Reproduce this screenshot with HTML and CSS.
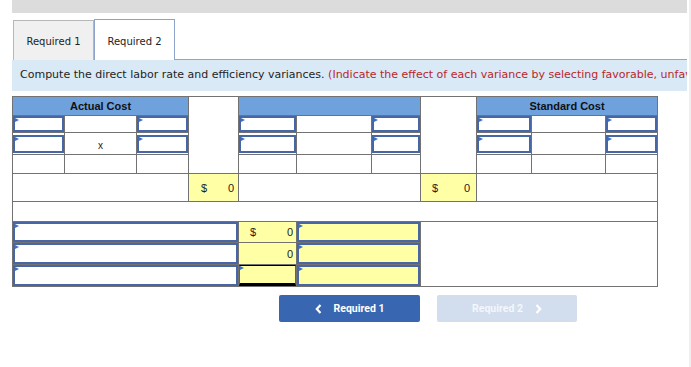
FILE: index.html
```html
<!DOCTYPE html>
<html>
<head>
<meta charset="utf-8">
<link rel="stylesheet" href="styles.css">
</head>
<body>
<div class="page">
  <div class="topbar"></div>
  <div class="tabs">
    <div class="tab">Required 1</div>
    <div class="tab active">Required 2</div>
    <div class="tabfill"></div>
  </div>
  <div class="instr"><span class="dark">Compute the direct labor rate and efficiency variances.</span> <span class="red">(Indicate the effect of each variance by selecting favorable, unfavorable, and no variance.)</span></div>
  <table class="grid">
    <colgroup>
      <col class="w52"><col class="w72"><col class="w52"><col class="w50"><col class="w58"><col class="w75"><col class="w49"><col class="w56"><col class="w55"><col class="w74"><col class="w52">
    </colgroup>
    <tr class="rh">
      <td colspan="3" class="head">Actual Cost</td>
      <td rowspan="4" class="blank"></td>
      <td colspan="3" class="head"></td>
      <td rowspan="4" class="blank"></td>
      <td colspan="3" class="head">Standard Cost</td>
    </tr>
    <tr class="r1">
      <td class="inp"><div class="box"></div></td><td></td><td class="inp"><div class="box"></div></td>
      <td class="inp"><div class="box"></div></td><td></td><td class="inp"><div class="box"></div></td>
      <td class="inp"><div class="box"></div></td><td></td><td class="inp"><div class="box"></div></td>
    </tr>
    <tr class="r2">
      <td class="inp"><div class="box"></div></td><td class="mid">x</td><td class="inp"><div class="box"></div></td>
      <td class="inp"><div class="box"></div></td><td></td><td class="inp"><div class="box"></div></td>
      <td class="inp"><div class="box"></div></td><td></td><td class="inp"><div class="box"></div></td>
    </tr>
    <tr class="r3">
      <td></td><td></td><td></td>
      <td></td><td></td><td></td>
      <td></td><td></td><td></td>
    </tr>
    <tr class="r4">
      <td colspan="3"></td>
      <td class="yel"><div class="amt a1"><span>$</span><span>0</span></div></td>
      <td colspan="3"></td>
      <td class="yel"><div class="amt a2"><span>$</span><span>0</span></div></td>
      <td colspan="3"></td>
    </tr>
    <tr class="r5">
      <td colspan="11"></td>
    </tr>
    <tr class="r6">
      <td colspan="4" class="inp"><div class="box"></div></td>
      <td class="yel"><div class="amt a3"><span>$</span><span>0</span></div></td>
      <td colspan="2" class="inp"><div class="box ybox"></div></td>
      <td colspan="4" rowspan="3"></td>
    </tr>
    <tr class="r7">
      <td colspan="4" class="inp"><div class="box"></div></td>
      <td class="yel"><div class="amt a3"><span></span><span>0</span></div></td>
      <td colspan="2" class="inp"><div class="box ybox"></div></td>
    </tr>
    <tr class="r8">
      <td colspan="4" class="inp"><div class="box"></div></td>
      <td class="inp"><div class="box tbox"></div></td>
      <td colspan="2" class="inp"><div class="box ybox"></div></td>
    </tr>
  </table>
  <div class="nav">
    <div class="btn prev">
      <svg class="chev" width="7" height="10" viewBox="0 0 7 10"><path d="M5.5 1 L1.8 5 L5.5 9" fill="none" stroke="#ffffff" stroke-width="2.2"/></svg>
      <span>Required 1</span>
    </div>
    <div class="btn next">
      <span>Required 2</span>
      <svg class="chev" width="7" height="10" viewBox="0 0 7 10"><path d="M1.5 1 L5.2 5 L1.5 9" fill="none" stroke="#ffffff" stroke-width="2.2"/></svg>
    </div>
  </div>
</div>
<div class="scrolltrack"></div>
</body>
</html>
```
FILE: styles.css
```css
html, body {
  margin: 0;
  padding: 0;
  background: #ffffff;
}
body {
  display: flex;
}
.page {
  padding-left: 12px;
  width: 675px;
  font-family: "DejaVu Sans", Verdana, sans-serif;
}
.scrolltrack {
  margin-left: 2px;
  width: 2px;
  height: 367px;
  background: #efefef;
}
.topbar {
  height: 13px;
  background: #dcdcdc;
}
.tabs {
  display: flex;
  align-items: flex-end;
  margin-top: 6px;
  height: 41px;
}
.tab {
  box-sizing: border-box;
  height: 40px;
  width: 81px;
  margin-left: 1px;
  border: 1px solid #b7b7b7;
  border-bottom: none;
  background: #f0f0f0;
  font-size: 10px;
  color: #222;
  display: flex;
  align-items: center;
  justify-content: center;
  padding-top: 2px;
}
.tab.active {
  height: 41px;
  width: 81px;
  margin-left: 0;
  background: #ffffff;
  border-color: #8ea3c9;
}
.tabfill {
  flex: 1;
  height: 40px;
  box-sizing: border-box;
  border-bottom: 1px solid #a3a3a3;
}
.instr {
  height: 31px;
  line-height: 30px;
  background: #d9e9f6;
  padding-left: 8px;
  font-size: 11px;
  white-space: nowrap;
  overflow: hidden;
}
.dark { color: #1f1f1f; }
.red { color: #b8272c; }

.grid {
  margin-top: 5px;
  border-collapse: collapse;
  table-layout: fixed;
  width: 646px;
  font-family: "Liberation Sans", Arial, sans-serif;
  font-size: 11px;
  color: #222;
}
.grid td {
  border: 1px solid #727272;
  padding: 0;
  vertical-align: middle;
}
.w52 { width: 52px; }
.w72 { width: 72px; }
.w50 { width: 50px; }
.w58 { width: 58px; }
.w75 { width: 75px; }
.w49 { width: 49px; }
.w56 { width: 56px; }
.w55 { width: 55px; }
.w74 { width: 74px; }

.rh td { height: 18px; }
.r1 td { height: 16px; }
.r2 td { height: 18px; }
.r3 td { height: 18px; }
.r4 td { height: 27px; }
.r5 td { height: 19px; }
.r6 td { height: 20px; }
.r7 td { height: 21px; }
.r8 td { height: 21px; }

.grid td.head {
  background: #6fa1dd;
  text-align: center;
  font-weight: bold;
  color: #111;
}
.grid td.mid {
  text-align: center;
  font-size: 10px;
  padding-top: 3px;
}
.grid td.yel {
  background: #ffffa6;
}
.amt {
  display: flex;
  justify-content: space-between;
}
.a1 { padding: 0 4px 0 12px; }
.a2 { padding: 0 6px 0 11px; }
.a3 { padding: 0 3px 0 11px; }

.grid td.inp {
  padding: 0;
}
.box {
  position: relative;
  box-sizing: border-box;
  height: 100%;
  border: 2px solid #4766a6;
  background: #ffffff;
}
.r1 .box { height: 16px; }
.r2 .box { height: 18px; }
.r6 .box { height: 20px; }
.r7 .box, .r8 .box { height: 21px; }
.box::before {
  content: "";
  position: absolute;
  left: 0;
  top: 0;
  border-left: 4px solid #3b72c9;
  border-top: 2.5px solid transparent;
  border-bottom: 2.5px solid transparent;
}
.box.ybox {
  background: #ffffa6;
}
.box.tbox {
  background: #ffffa6;
  border-left: 1px solid #4564a4;
  border-right: 1px solid #4564a4;
  border-top: 1px solid #000;
  border-bottom: 3px solid #000;
}

.nav {
  display: flex;
  margin-top: 8px;
  margin-left: 267px;
  gap: 17px;
}
.btn {
  width: 141px;
  height: 27px;
  border-radius: 2px;
  display: flex;
  align-items: center;
  justify-content: center;
  gap: 12px;
  font-family: Roboto, "Liberation Sans", sans-serif;
  font-weight: 700;
  font-size: 10.5px;
  color: #ffffff;
}
.btn.prev { background: #3966b0; }
.btn.next { background: #d2deee; width: 140px; color: #f4f7fb; }
.chev { display: block; }
```
